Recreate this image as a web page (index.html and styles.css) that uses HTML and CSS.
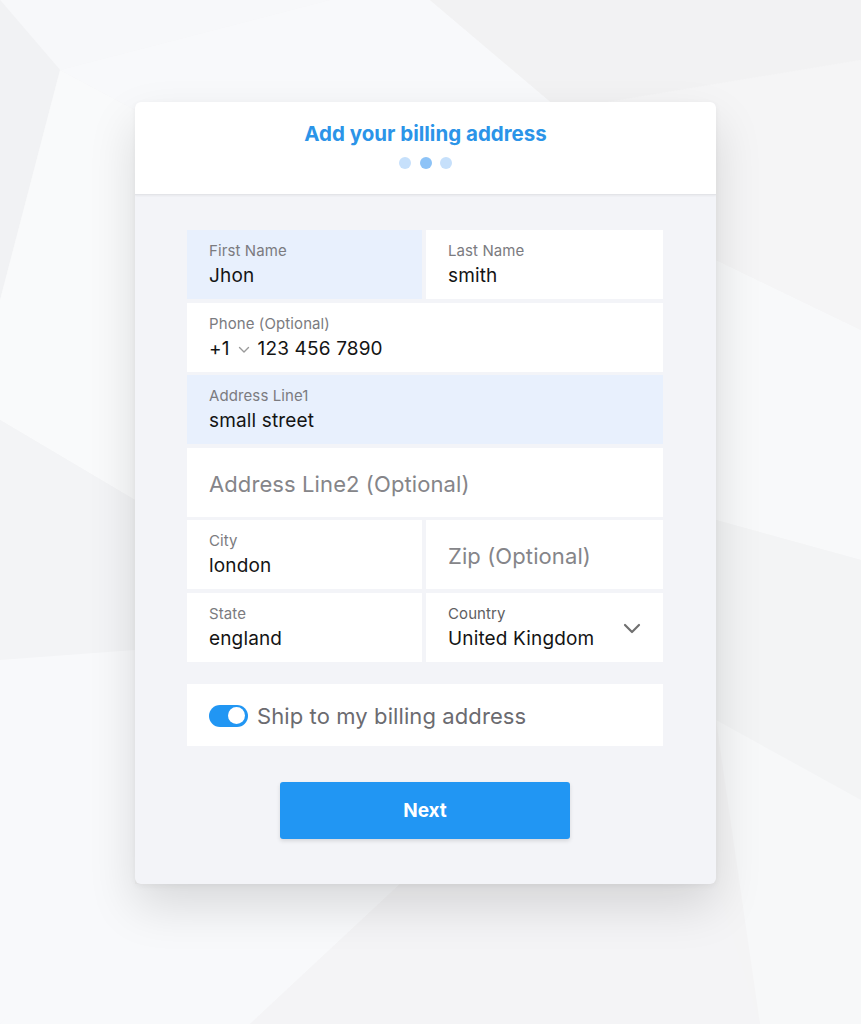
FILE: index.html
```html
<!DOCTYPE html>
<html lang="en">
<head>
<meta charset="utf-8">
<title>Add your billing address</title>
<link rel="stylesheet" href="styles.css">
</head>
<body>
<svg class="bg" viewBox="0 0 861 1024" preserveAspectRatio="none" aria-hidden="true">
  <rect width="861" height="1024" fill="#f4f4f5"/>
  <polygon points="0,0 330,0 60,70" fill="#f7f8fa"/>
  <polygon points="60,70 330,0 430,0 560,110 135,110" fill="#f8f9fb"/>
  <polygon points="0,0 60,70 0,300" fill="#f1f2f4"/>
  <polygon points="60,70 135,110 135,500 0,420 0,300" fill="#f9fafb"/>
  <polygon points="0,420 135,500 135,650 0,660" fill="#f3f4f6"/>
  <polygon points="0,660 135,650 135,900 0,1024" fill="#f8f9fb"/>
  <polygon points="560,110 430,0 861,0 861,60" fill="#f2f2f3"/>
  <polygon points="716,260 861,330 861,560 716,520" fill="#f8f9fa"/>
  <polygon points="716,520 861,560 861,800 716,720" fill="#f3f4f5"/>
  <polygon points="716,720 861,800 861,1024 760,1024" fill="#f7f8f9"/>
  <polygon points="135,884 400,884 250,1024 0,1024" fill="#f8f9fb"/>
  <polygon points="400,884 716,884 760,1024 250,1024" fill="#f4f4f6"/>
  <polygon points="560,110 861,60 861,330 716,260" fill="#f5f5f6"/>
</svg>

<main class="card">
  <header class="card-head">
    <h1 class="title">Add your billing address</h1>
    <div class="dots">
      <span class="dot"></span>
      <span class="dot active"></span>
      <span class="dot"></span>
    </div>
  </header>

  <section class="card-body">
    <div class="fields">
      <div class="field focus">
        <span class="label">First Name</span>
        <span class="value">Jhon</span>
      </div>
      <div class="field">
        <span class="label">Last Name</span>
        <span class="value">smith</span>
      </div>
      <div class="field wide">
        <span class="label">Phone (Optional)</span>
        <span class="value phone"><span>+1</span><svg class="mini-chev" viewBox="0 0 12 8" width="12" height="8"><path d="M1.5 1.5 L6 6 L10.5 1.5" fill="none" stroke="#9a9a9a" stroke-width="1.4" stroke-linecap="round" stroke-linejoin="round"/></svg><span>123 456 7890</span></span>
      </div>
      <div class="field wide focus">
        <span class="label">Address Line1</span>
        <span class="value">small street</span>
      </div>
      <div class="field wide empty">
        <span class="placeholder">Address Line2 (Optional)</span>
      </div>
      <div class="field">
        <span class="label">City</span>
        <span class="value">london</span>
      </div>
      <div class="field empty">
        <span class="placeholder">Zip (Optional)</span>
      </div>
      <div class="field">
        <span class="label">State</span>
        <span class="value">england</span>
      </div>
      <div class="field select">
        <div class="select-text">
          <span class="label dark">Country</span>
          <span class="value">United Kingdom</span>
        </div>
        <svg class="chev" viewBox="0 0 18 12" width="18" height="12"><path d="M2 2 L9 9 L16 2" fill="none" stroke="#707070" stroke-width="2.2" stroke-linecap="round" stroke-linejoin="round"/></svg>
      </div>
    </div>

    <div class="ship">
      <span class="toggle"><span class="knob"></span></span>
      <span class="ship-text">Ship to my billing address</span>
    </div>

    <div class="actions">
      <button class="next" type="button">Next</button>
    </div>
  </section>
</main>
</body>
</html>
```

FILE: styles.css
```css
html, body {
  margin: 0;
  padding: 0;
}

body {
  font-family: "Inter", "Noto Sans", "Liberation Sans", sans-serif;
  min-height: 1024px;
  position: relative;
  padding-top: 102px;
  box-sizing: border-box;
}

.bg {
  position: absolute;
  left: 0;
  top: 0;
  width: 861px;
  height: 1024px;
  z-index: 0;
}

.card {
  position: relative;
  z-index: 1;
  width: 581px;
  margin-left: 135px;
  border-radius: 6px;
  background: #f3f4f8;
  box-shadow: 0 22px 48px rgba(0, 0, 0, 0.13), 0 2px 6px rgba(0, 0, 0, 0.05);
  overflow: hidden;
}

.card-head {
  background: #ffffff;
  height: 93px;
  box-sizing: border-box;
  padding-top: 20px;
  border-bottom: 1px solid #e3e4e8;
  box-shadow: 0 1px 2px rgba(0, 0, 0, 0.05);
  display: flex;
  flex-direction: column;
  align-items: center;
}

.title {
  margin: 0;
  font-size: 20.5px;
  line-height: 24px;
  font-weight: 700;
  color: #2b94e8;
  letter-spacing: 0;
}

.dots {
  display: flex;
  gap: 8.5px;
  margin-top: 11px;
}

.dot {
  width: 12px;
  height: 12px;
  border-radius: 50%;
  background: #c6e0fb;
}

.dot.active {
  background: #8dc3f7;
}

.card-body {
  padding: 35px 53px 45px 52px;
}

.fields {
  display: grid;
  grid-template-columns: 235px 1fr;
  grid-auto-rows: 69px;
  gap: 3.6px 4px;
}

.field {
  background: #ffffff;
  padding: 12px 22px 0;
  display: flex;
  flex-direction: column;
  box-sizing: border-box;
}

.field.wide {
  grid-column: 1 / 3;
}

.field.focus {
  background: #e8f0fd;
}

.label {
  font-size: 15px;
  line-height: 18px;
  color: #7b7b80;
  letter-spacing: 0.1px;
}

.label.dark {
  color: #5e5e62;
}

.value {
  margin-top: 4px;
  font-size: 19px;
  line-height: 24px;
  color: #141414;
  letter-spacing: 0.15px;
}

.phone {
  display: flex;
  align-items: center;
}

.mini-chev {
  margin: 3px 8px 0 8px;
}

.field.empty {
  padding: 3px 22px 0;
  justify-content: center;
}

.placeholder {
  font-size: 22px;
  line-height: 28px;
  color: #858589;
  letter-spacing: 0.1px;
}

.field.select {
  flex-direction: row;
  align-items: flex-start;
  justify-content: space-between;
}

.select-text {
  display: flex;
  flex-direction: column;
}

.chev {
  margin-top: 18px;
}

.ship {
  margin-top: 22px;
  height: 62px;
  background: #ffffff;
  display: flex;
  align-items: center;
  padding-left: 22px;
  padding-top: 2px;
  box-sizing: border-box;
  gap: 9px;
}

.toggle {
  width: 39px;
  height: 22px;
  border-radius: 11px;
  background: #2196f3;
  display: flex;
  align-items: center;
  justify-content: flex-end;
  padding-right: 3px;
  box-sizing: border-box;
}

.knob {
  width: 17px;
  height: 17px;
  border-radius: 50%;
  background: #ffffff;
}

.ship-text {
  font-size: 22px;
  line-height: 28px;
  color: #6b6b70;
  letter-spacing: 0.1px;
}

.actions {
  display: flex;
  justify-content: center;
  margin-top: 36px;
}

.next {
  width: 290px;
  height: 57px;
  border: none;
  border-radius: 3px;
  background: #2196f3;
  color: #ffffff;
  font-family: "Inter", "Noto Sans", "Liberation Sans", sans-serif;
  font-size: 19px;
  font-weight: 700;
  box-shadow: 0 2px 4px rgba(0, 0, 0, 0.12);
  cursor: pointer;
}
```
